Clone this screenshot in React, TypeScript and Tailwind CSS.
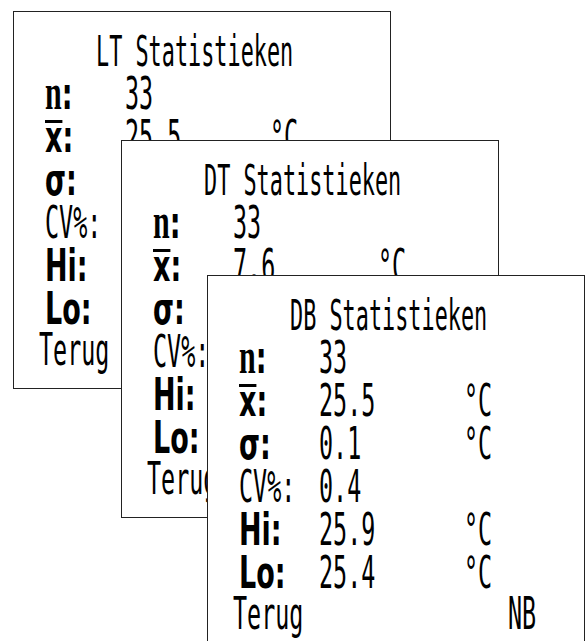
import type { ReactNode } from "react";

const mono = "font-['DejaVu_Sans_Mono','Liberation_Mono',monospace]";
const boldSans = "font-['DejaVu_Sans','Liberation_Sans',sans-serif] font-bold";

type Row = { label: ReactNode; value: string; unit?: string };

function Thin({ children }: { children: ReactNode }) {
  return (
    <span className={`${mono} inline-block origin-left scale-x-[0.52] whitespace-pre`}>
      {children}
    </span>
  );
}

function Bold({ children }: { children: ReactNode }) {
  return (
    <span className={`${boldSans} inline-block origin-left scale-x-[0.6] whitespace-pre`}>
      {children}
    </span>
  );
}

const labels = {
  // the meter draws n with slab serifs
  n: (
    <Bold>
      <span className="font-['Liberation_Serif','DejaVu_Serif',serif] text-[50px]">n</span>:
    </Bold>
  ),
  mean: (
    <Bold>
      <span className="inline-block border-t-[3px] border-black leading-[28px]">x</span>:
    </Bold>
  ),
  sigma: <Bold>σ:</Bold>,
  cv: <Thin>CV%:</Thin>,
  hi: <Bold>Hi:</Bold>,
  lo: <Bold>Lo:</Bold>,
};

function Panel({ title, rows, className }: { title: string; rows: Row[]; className: string }) {
  return (
    <div className={`absolute w-[378px] h-[378px] bg-white border border-[#222] text-black ${className}`}>
      <div className="pt-[18px] pl-[82px] h-[58px] text-[42px] leading-[40px]">
        <Thin>{title}</Thin>
      </div>
      <div className="pl-[31px] text-[45px] leading-[43px]">
        {rows.map((r, i) => (
          <div key={i} className="grid grid-cols-[80px_145px_1fr] h-[43px]">
            <div>{r.label}</div>
            <div>
              <Thin>{r.value}</Thin>
            </div>
            <div>{r.unit ? <Thin>°C</Thin> : null}</div>
          </div>
        ))}
      </div>
      <div className="grid grid-cols-[275px_1fr] pl-[25px] h-[43px] text-[45px] leading-[43px]">
        <Thin>Terug</Thin>
        <Thin>NB</Thin>
      </div>
    </div>
  );
}

function rowsFor(mean: string, sd: string, cv: string, hi: string, lo: string): Row[] {
  return [
    { label: labels.n, value: "33" },
    { label: labels.mean, value: mean, unit: "C" },
    { label: labels.sigma, value: sd, unit: "C" },
    { label: labels.cv, value: cv },
    { label: labels.hi, value: hi, unit: "C" },
    { label: labels.lo, value: lo, unit: "C" },
  ];
}

export default function App() {
  return (
    <div className="relative w-[586px] h-[641px] overflow-hidden bg-white">
      <Panel title="LT Statistieken" rows={rowsFor("25.5", "0.1", "0.4", "25.9", "25.4")} className="left-[13px] top-[11px]" />
      <Panel title="DT Statistieken" rows={rowsFor("7.6", "0.2", "2.6", "7.9", "7.2")} className="left-[121px] top-[140px]" />
      <Panel title="DB Statistieken" rows={rowsFor("25.5", "0.1", "0.4", "25.9", "25.4")} className="left-[207px] top-[275px]" />
    </div>
  );
}
